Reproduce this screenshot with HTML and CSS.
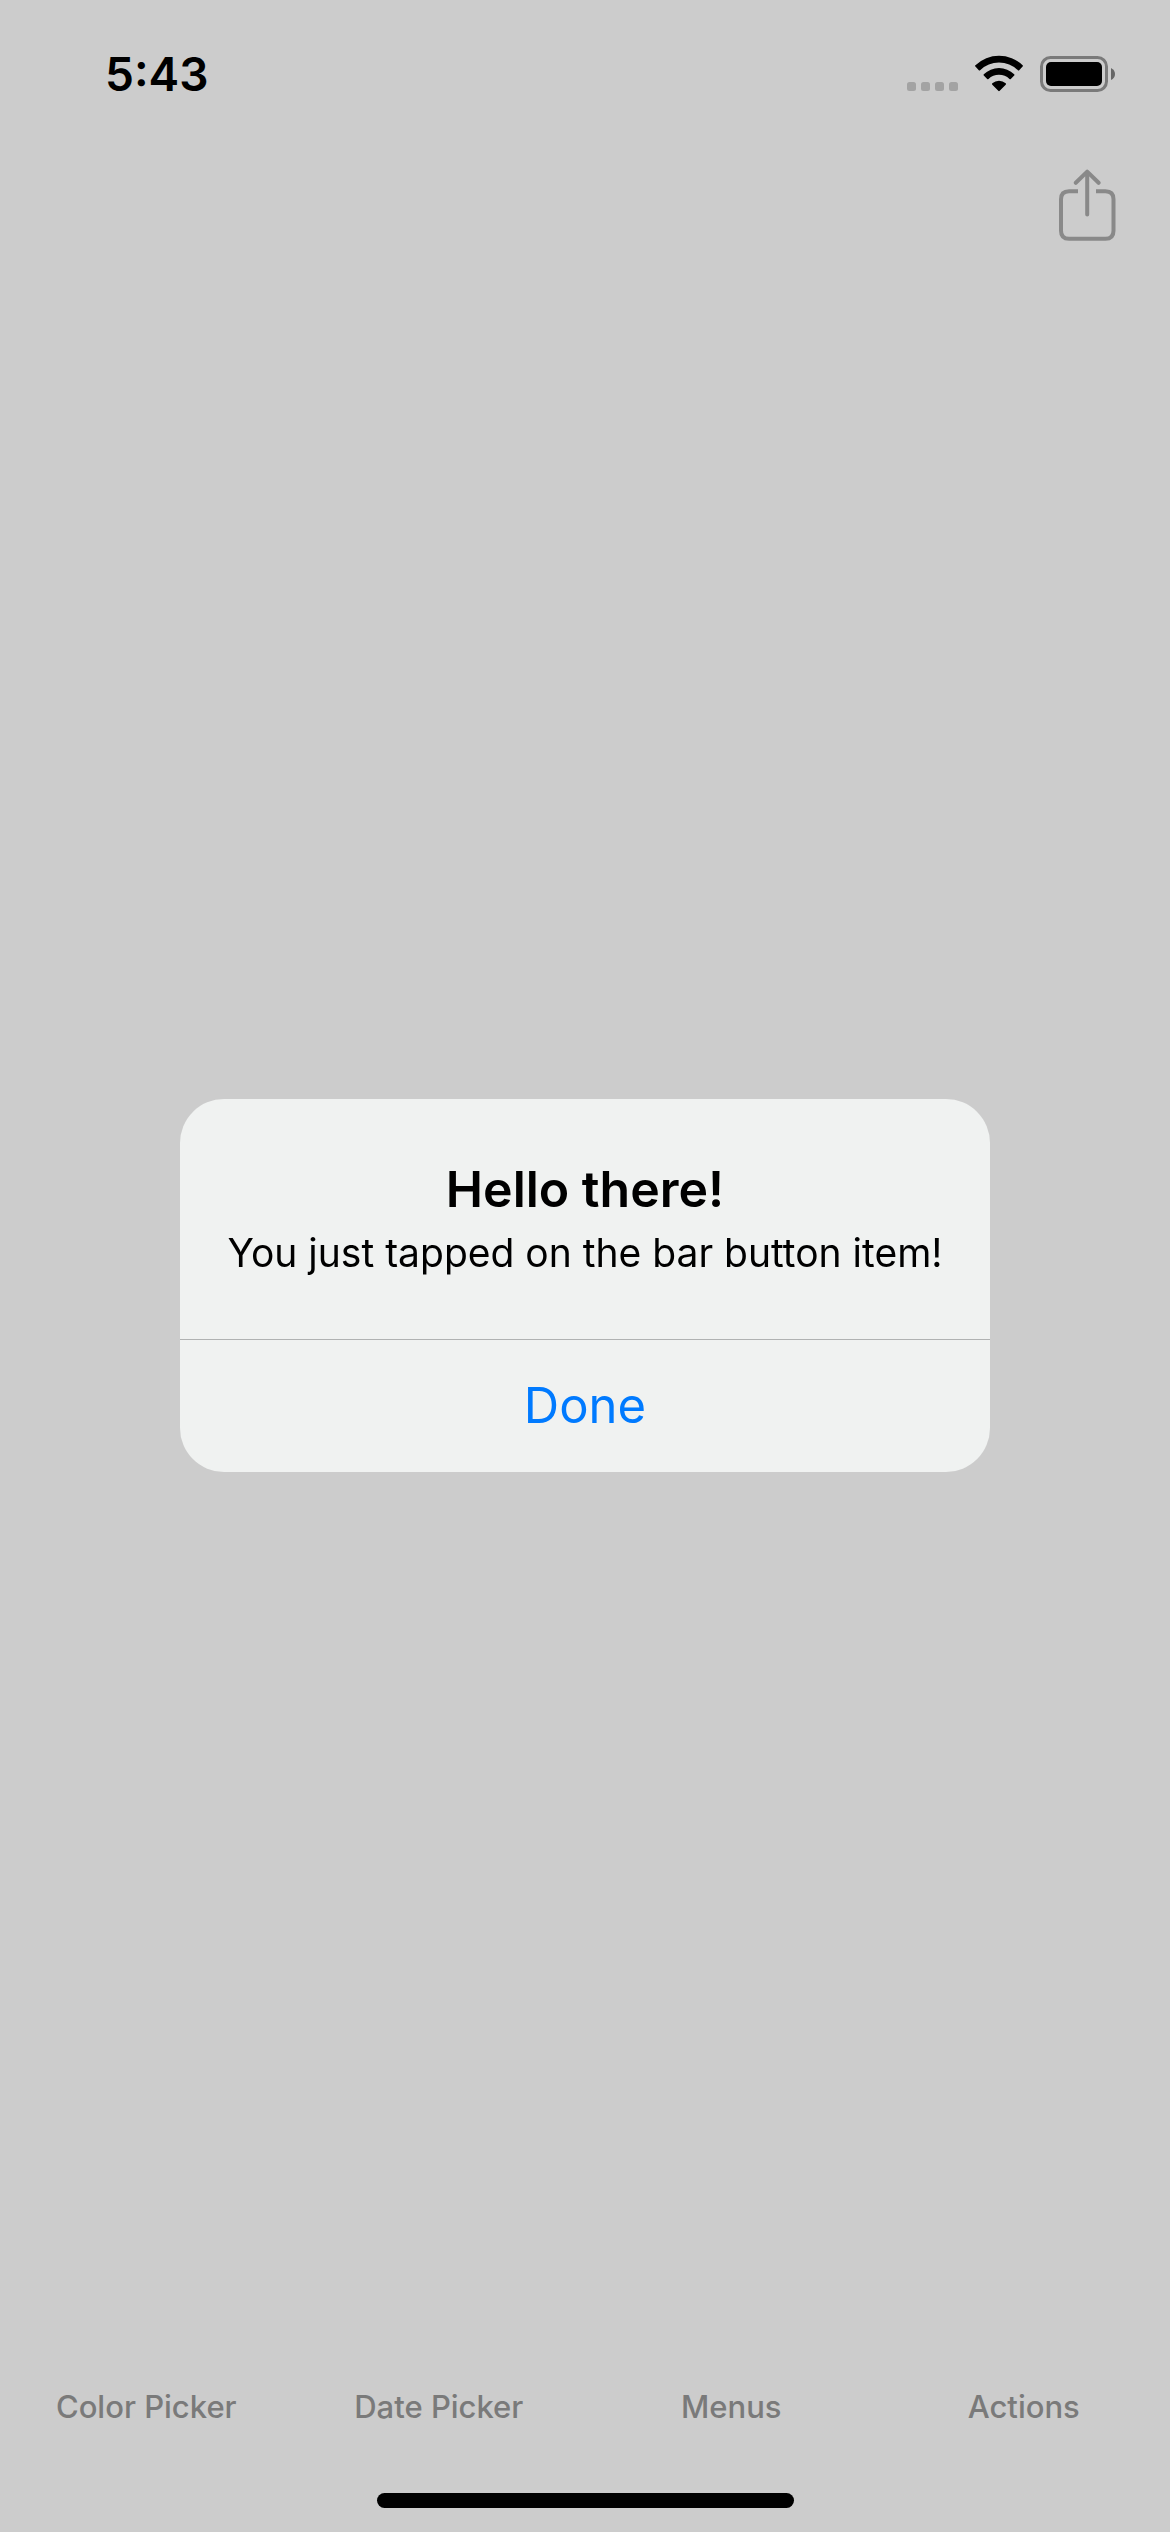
FILE: index.html
```html
<!DOCTYPE html>
<html lang="en">
<head>
<meta charset="utf-8">
<meta name="viewport" content="width=device-width">
<title>Actions</title>
<link rel="stylesheet" href="styles.css">
</head>
<body>
<div class="screen">
  <header class="status-bar">
    <time class="clock">5:43</time>
    <div class="status-icons">
      <svg width="51" height="10" viewBox="0 0 51 10" fill="#ccc" aria-hidden="true">
        <rect width="9" height="9" rx="2.5"/><rect x="14" width="9" height="9" rx="2.5"/><rect x="28" width="9" height="9" rx="2.5"/><rect x="42" width="9" height="9" rx="2.5"/>
      </svg>
      <svg width="48" height="37" viewBox="0 0 48 37" aria-hidden="true">
        <path d="M.4 10.2A34 34 0 0 1 47.6 10.2Q48.3 10.9 47.6 11.6L44.2 15.2Q43.6 15.8 42.9 15.2A27.3 27.3 0 0 0 5.1 15.2Q4.4 15.8 3.8 15.2L.4 11.6Q-.3 10.9 .4 10.2Z"/>
        <path d="M8.8 19.2A22 22 0 0 1 39.2 19.2Q39.9 19.9 39.2 20.6L35.8 24Q35.2 24.6 34.5 24A15.2 15.2 0 0 0 13.5 24Q12.8 24.6 12.2 24L8.8 20.6Q8.1 19.9 8.8 19.2Z"/>
        <path d="M17.3 28.3A10.2 10.2 0 0 1 30.7 28.3Q31.4 29 30.7 29.7L24.7 35.8Q24 36.5 23.3 35.8L17.3 29.7Q16.6 29 17.3 28.3Z"/>
      </svg>
      <svg width="75" height="36" viewBox="0 0 75 36" aria-hidden="true">
        <rect x="1.5" y="1.5" width="65" height="33" rx="9" fill="none" stroke="#999" stroke-width="3"/>
        <rect x="6" y="6" width="56" height="24" rx="5"/>
        <path d="M71 12Q75 14 75 18T71 24Z" fill="#808080"/>
      </svg>
    </div>
  </header>
  <nav class="nav-bar">
    <button class="share" type="button" aria-label="Share">
      <svg width="57" height="72" viewBox="0 0 57 72" fill="none" stroke="#acacac" stroke-width="4">
        <path d="M19 22.2H10Q2 22.2 2 30.2V61.8Q2 69.8 10 69.8H46.5Q54.5 69.8 54.5 61.8V30.2Q54.5 22.2 46.5 22.2H37"/>
        <path d="M28.2 3V45.5M16.8 13.8L28.2 2.6L39.6 13.8" stroke-linecap="round" stroke-linejoin="round"/>
      </svg>
    </button>
  </nav>
  <main class="content"></main>
  <footer class="tab-bar">
    <nav class="tabs">
      <a class="tab" href="#color-picker">Color Picker</a>
      <a class="tab" href="#date-picker">Date Picker</a>
      <a class="tab" href="#menus">Menus</a>
      <a class="tab" href="#actions">Actions</a>
    </nav>
    <div class="home-indicator"></div>
  </footer>
</div>
<div class="overlay">
  <section class="alert" role="alertdialog" aria-modal="true" aria-labelledby="alert-title" aria-describedby="alert-message">
    <div class="alert-text">
      <h1 class="alert-title" id="alert-title">Hello there!</h1>
      <p class="alert-message" id="alert-message">You just tapped on the bar button item!</p>
    </div>
    <button class="alert-action" type="button">Done</button>
  </section>
</div>
</body>
</html>
```
FILE: styles.css
```css
* {
  box-sizing: border-box;
}

body {
  margin: 0;
  background: #fff;
  color: #000;
  font-family: Inter, "Liberation Sans", sans-serif;
}

svg {
  display: block;
}

button {
  padding: 0;
  border: 0;
  background: none;
  font: inherit;
}

.screen {
  display: flex;
  flex-direction: column;
  min-height: 100vh;
}

.status-bar {
  display: flex;
  justify-content: space-between;
  padding: 46px 55px 39px 105px;
}

.clock {
  font-size: 46px;
  font-weight: 600;
  line-height: 56px;
}

.status-icons {
  display: flex;
  align-items: flex-end;
  gap: 17px;
  padding-bottom: 10px;
}

.nav-bar {
  display: flex;
  justify-content: flex-end;
  padding: 28px 54px 32px;
}

.content {
  flex: 1;
}

.tabs {
  display: grid;
  grid-template-columns: repeat(4, 1fr);
}

.tab {
  color: #999;
  font-size: 31px;
  font-weight: 500;
  line-height: 60px;
  text-align: center;
  text-decoration: none;
}

.home-indicator {
  width: 417px;
  height: 15px;
  margin: 56px auto 24px;
  border-radius: 8px;
  background: #000;
}

/* Dimmed layer that holds the alert */
.overlay {
  position: fixed;
  inset: 0;
  display: grid;
  place-items: center;
  padding: 39px 24px 0;
  background: rgba(0, 0, 0, 0.2);
}

.alert {
  width: 100%;
  max-width: 810px;
  overflow: hidden;
  border-radius: 44px;
  background: #f0f2f1;
  text-align: center;
}

.alert-text {
  display: grid;
  gap: 9px;
  padding: 60px 24px 61px;
}

.alert-title,
.alert-message {
  margin: 0;
}

.alert-title {
  font-size: 50px;
  font-weight: 600;
  line-height: 60px;
}

.alert-message {
  font-size: 39px;
  line-height: 50px;
}

.alert-action {
  display: block;
  width: 100%;
  border-top: 1px solid #b0b2b2;
  color: #007aff;
  font-size: 49px;
  line-height: 132px;
}
```
